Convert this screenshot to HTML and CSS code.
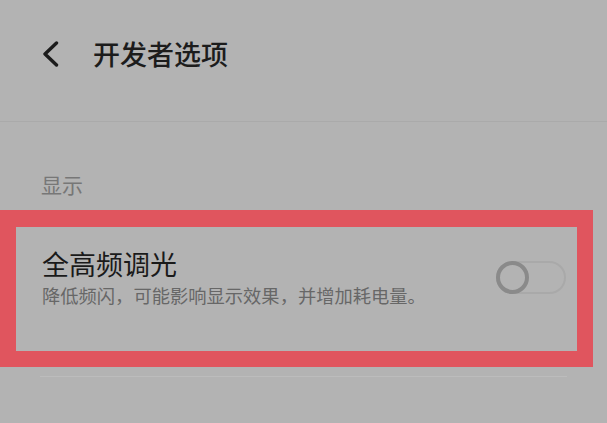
FILE: index.html
```html
<!DOCTYPE html>
<html>
<head>
    <title>开发者选项</title>
    <meta charset="UTF-8">
    <meta name="viewport" content="width=device-width, initial-scale=1.0" />
    <link rel="stylesheet" href="styles.css">
</head>

<body>
    <div class="header">
        <svg class="back" width="16" height="26" viewBox="0 0 16 26">
            <polyline points="13.5,2 2,13 13.5,24" fill="none" stroke="#1c1c1c" stroke-width="3.4" stroke-linecap="round" stroke-linejoin="round" />
        </svg>
        <h1 class="title">开发者选项</h1>
    </div>

    <div class="section-label">显示</div>

    <div class="item">
        <div class="row">
            <div class="text">
                <div class="item-title">全高频调光</div>
                <div class="item-desc">降低频闪，可能影响显示效果，并增加耗电量。</div>
            </div>
            <div class="switch"><span class="knob"></span></div>
        </div>
    </div>

    <div class="divider"></div>
</body>
</html>
```

FILE: styles.css
```css
html { margin: 0; padding: 0; border: 0; }
body { margin: 0; font-family: "Noto Sans CJK SC", "Noto Sans", sans-serif; background-color: #b3b3b3; color: #1c1c1c; }

.header { display: flex; align-items: center; height: 122px; box-sizing: border-box; padding: 0 0 14px 43px; border-bottom: 1px solid #aaaaaa; }
.back { display: block; }
.title { margin: 0 0 0 34px; font-size: 27px; line-height: 27px; font-weight: 500; }

.section-label { margin-top: 52px; padding-left: 41px; font-size: 21px; line-height: 21px; color: #777777; }

.item { box-sizing: border-box; width: 593px; height: 157px; margin-top: 15px; border: 16px solid #e0555e; border-top-width: 17px; padding: 23px 11px 0 26px; }
.row { display: flex; align-items: center; justify-content: space-between; }
.item-title { font-size: 27px; line-height: 27px; color: #1a1a1a; }
.item-desc { margin-top: 9px; font-size: 18.3px; line-height: 19px; color: #676767; }

.switch { display: flex; align-items: center; box-sizing: border-box; width: 70px; height: 33px; border: 2px solid #a9a9a9; border-radius: 17px; }
.knob { box-sizing: border-box; width: 33px; height: 33px; margin-left: -2px; border: 4px solid #8a8a8a; border-radius: 50%; }

.divider { height: 1px; margin: 9px 40px 0 40px; background-color: #bcbcbc; }
```
